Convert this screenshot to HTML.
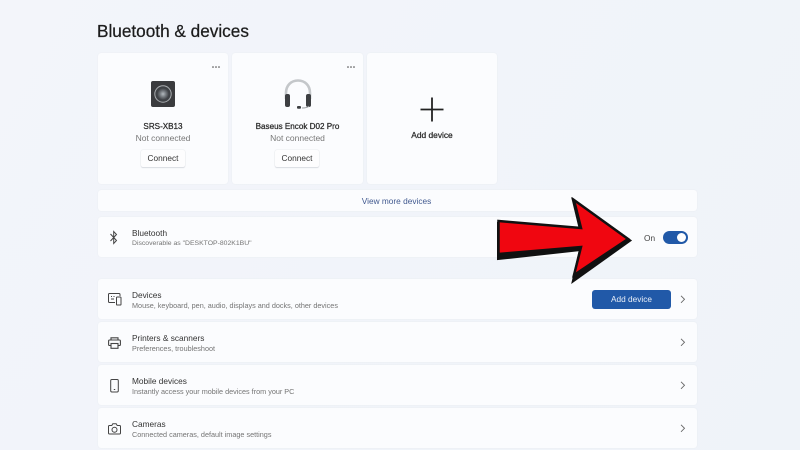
<!DOCTYPE html>
<html><head><meta charset="utf-8">
<style>
html,body{margin:0;padding:0}
html{background:#f1f4f9}
body{width:800px;height:450px;overflow:hidden;position:relative;font-family:"Liberation Sans",sans-serif;color:#1f1f1f}
#w{position:absolute;left:0;top:0;width:800px;height:450px;overflow:hidden;background:linear-gradient(120deg,#f3f5fa,#eff3f9);filter:blur(.3px)}
.a{position:absolute}
.card{position:absolute;background:#fbfcfe;border-radius:3px;box-shadow:0 0 1px #dfe3e9}
.t{position:absolute;white-space:nowrap}
.c{text-align:center}
.title{left:97px;top:21px;font-size:17.2px;line-height:20px;color:#1c1c1c;-webkit-text-stroke:.25px #1c1c1c}
.name{font-size:8.1px;line-height:10px;color:#2b2b2b;-webkit-text-stroke:.25px #2b2b2b}
.nc{font-size:8.5px;line-height:10px;color:#777}
.btn{position:absolute;background:#fdfdfe;border-radius:2px;box-shadow:0 0 1px #c8ccd2,0 1px 1px #dcdfe4;width:44px;height:17px;font-size:8.3px;line-height:17px;text-align:center;color:#333}
.dots{position:absolute;width:9px;height:3px}
.h{font-size:8.3px;line-height:10px;color:#333}
.s{font-size:7.25px;line-height:9px;color:#747474}
svg{position:absolute;overflow:visible}
</style></head><body><div id="w">
<div class="t title">Bluetooth &amp; devices</div>

<div class="card" style="left:98px;top:53px;width:130px;height:131px"></div>
<div class="card" style="left:232px;top:53px;width:131px;height:131px"></div>
<div class="card" style="left:367px;top:53px;width:130px;height:131px"></div>

<svg class="dots" style="left:212px;top:66px"><g fill="#444"><circle cx="1" cy="1" r=".8"/><circle cx="4" cy="1" r=".8"/><circle cx="7" cy="1" r=".8"/></g></svg>
<svg class="dots" style="left:347px;top:66px"><g fill="#444"><circle cx="1" cy="1" r=".8"/><circle cx="4" cy="1" r=".8"/><circle cx="7" cy="1" r=".8"/></g></svg>

<svg style="left:151px;top:81px" width="24" height="26">
<defs><radialGradient id="g"><stop offset="0" stop-color="#b4babf"/><stop offset=".6" stop-color="#6d7277"/><stop offset="1" stop-color="#44474b"/></radialGradient></defs>
<rect x="0" y="0" width="24" height="26" rx="2" fill="#3a3b3e"/>
<circle cx="12" cy="13" r="8.2" fill="#3f4246" stroke="#a9adb0" stroke-width="1"/>
<circle cx="12" cy="13" r="5.6" fill="url(#g)"/>
</svg>

<svg style="left:283px;top:79px" width="30" height="30">
<path d="M3 20V14C3 6.5 8 1.5 15 1.500S27 6.500 27 14V20" fill="none" stroke="#c4c7ca" stroke-width="2.600"/>
<rect x="2" y="15" width="5" height="13" rx="2" fill="#3d3f42"/>
<rect x="23" y="15" width="5" height="13" rx="2" fill="#3d3f42"/>
<path d="M26 27C25 28.500 23 29 19 29" fill="none" stroke="#9a9da0" stroke-width="1"/>
<rect x="14" y="27" width="4" height="2.800" rx="1" fill="#3d3f42"/>
</svg>

<div class="t c name" style="left:98px;top:122px;width:130px">SRS-XB13</div>
<div class="t c nc" style="left:98px;top:133px;width:130px">Not connected</div>
<div class="btn" style="left:141px;top:150px">Connect</div>

<div class="t c name" style="left:232px;top:122px;width:131px">Baseus Encok D02 Pro</div>
<div class="t c nc" style="left:232px;top:133px;width:131px">Not connected</div>
<div class="btn" style="left:275px;top:150px">Connect</div>

<svg style="left:420px;top:97px" width="24" height="25"><path d="M12 .5V24.500M.5 12.500H23.500" stroke="#222" stroke-width="1.800" fill="none"/></svg>
<div class="t c name" style="left:367px;top:130px;width:130px;font-size:8.400px">Add device</div>

<div class="card" style="left:98px;top:190px;width:599px;height:21px"></div>
<div class="t c" style="left:97px;top:196px;width:599px;font-size:8.300px;line-height:10px;color:#41598f">View more devices</div>

<div class="card" style="left:98px;top:217px;width:599px;height:40px"></div>
<svg style="left:109px;top:230px" width="10" height="15"><path d="M1.500 4L7.500 10.500L4.700 13.500V1.500L7.500 4.500L1.500 11" fill="none" stroke="#444" stroke-width="1"/></svg>
<div class="t h" style="left:132px;top:228px">Bluetooth</div>
<div class="t s" style="left:132px;top:239px;font-size:6.85px">Discoverable as "DESKTOP-802K1BU"</div>
<div class="t" style="left:644px;top:233px;font-size:8.300px;line-height:10px;color:#444">On</div>
<div class="a" style="left:663px;top:231px;width:25px;height:13px;border-radius:7px;background:#2159a8"></div>
<div class="a" style="left:677px;top:233px;width:9px;height:9px;border-radius:50%;background:#fff"></div>

<div class="card" style="left:98px;top:279px;width:599px;height:40px"></div>
<div class="card" style="left:98px;top:322px;width:599px;height:40px"></div>
<div class="card" style="left:98px;top:365px;width:599px;height:40px"></div>
<div class="card" style="left:98px;top:408px;width:599px;height:40px"></div>

<svg style="left:108px;top:293px" width="14" height="13" fill="none" stroke="#444" stroke-width="1">
<path d="M7 9.500H1.500Q.5 9.500 .5 8.500V1.500Q.5 .5 1.500 .5H11Q12 .5 12 1.500V3"/>
<rect x="8.500" y="4" width="4.500" height="8" rx=".8"/>
<path d="M3 3.500H4M5.500 3.500H6.500M3 6H6" stroke-width="1"/>
</svg>
<div class="t h" style="left:132px;top:290px">Devices</div>
<div class="t s" style="left:132px;top:301px">Mouse, keyboard, pen, audio, displays and docks, other devices</div>
<div class="a" style="left:592px;top:290px;width:79px;height:19px;border-radius:3px;background:#2159a8;color:#e8eef8;font-size:8.300px;line-height:19px;text-align:center">Add device</div>

<svg style="left:108px;top:337px" width="13" height="12" fill="none" stroke="#444" stroke-width="1.100">
<path d="M3 3V.8H10V3M3 8.500H1.500Q.6 8.500 .6 7.500V4Q.6 3 1.600 3H11.400Q12.400 3 12.400 4V7.500Q12.400 8.500 11.500 8.500H10"/>
<rect x="3" y="6.500" width="7" height="4.800"/>
</svg>
<div class="t h" style="left:132px;top:333px">Printers &amp; scanners</div>
<div class="t s" style="left:132px;top:344px">Preferences, troubleshoot</div>

<svg style="left:110px;top:379px" width="9" height="14" fill="none" stroke="#444" stroke-width="1">
<rect x=".7" y=".5" width="7.600" height="12.500" rx="1.200"/>
<path d="M3.800 10.500H5.200"/>
</svg>
<div class="t h" style="left:132px;top:376px">Mobile devices</div>
<div class="t s" style="left:132px;top:387px">Instantly access your mobile devices from your PC</div>

<svg style="left:108px;top:423px" width="13" height="12" fill="none" stroke="#444" stroke-width="1">
<path d="M1.500 2.500H3.800L4.800 .8H8.200L9.200 2.500H11.500Q12.500 2.500 12.500 3.500V10Q12.500 11 11.500 11H1.500Q.5 11 .5 10V3.500Q.5 2.500 1.500 2.500Z"/>
<circle cx="6.500" cy="6.700" r="2.500"/>
</svg>
<div class="t h" style="left:132px;top:419px">Cameras</div>
<div class="t s" style="left:132px;top:430px">Connected cameras, default image settings</div>

<svg style="left:680px;top:295px" width="6" height="9"><path d="M1 .8L4.500 4.300L1 7.800" fill="none" stroke="#666" stroke-width=".9"/></svg>
<svg style="left:680px;top:338px" width="6" height="9"><path d="M1 .8L4.500 4.300L1 7.800" fill="none" stroke="#666" stroke-width=".9"/></svg>
<svg style="left:680px;top:381px" width="6" height="9"><path d="M1 .8L4.500 4.300L1 7.800" fill="none" stroke="#666" stroke-width=".9"/></svg>
<svg style="left:680px;top:424px" width="6" height="9"><path d="M1 .8L4.500 4.300L1 7.800" fill="none" stroke="#666" stroke-width=".9"/></svg>

<svg style="left:0;top:0" width="800" height="450">
<path d="M498 222L580 228L573 199L629 239L573 279L580 248L498 257Z" fill="#111" stroke="#111" stroke-width="3" stroke-linejoin="miter" transform="translate(.5,1.500)"/>
<path d="M498.500 221L581 228L574 200L628 239L574 275L581 247L498.500 254Z" fill="#f00610" stroke="#111" stroke-width="2.500" stroke-linejoin="miter"/>
</svg>
</div></body></html>
